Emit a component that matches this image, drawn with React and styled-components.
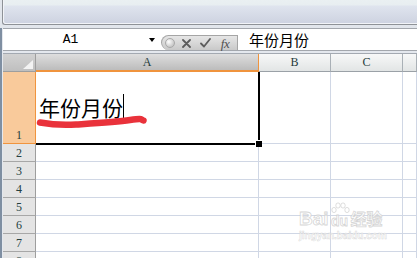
import React from "react";
import styled, { createGlobalStyle } from "styled-components";

const GlobalStyle = createGlobalStyle`
  html, body { margin: 0; padding: 0; }
  body {
    width: 417px; height: 258px; overflow: hidden;
    background: #dde2ea;
    font-family: "Liberation Sans", "Noto Sans CJK SC", sans-serif;
  }
  * { box-sizing: border-box; }
`;

const Window = styled.div`
  position: relative;
  width: 417px;
  height: 258px;
  overflow: hidden;
  display: flex;
  flex-direction: column;
  background: #e2e6ec;
`;

const Ribbon = styled.div`
  height: 25px;
  flex: none;
  margin-left: 2px;
  background: linear-gradient(to bottom, #eaf0f2 0px, #e8eef1 5px, #dfe4ee 6px, #cdd2e0 24px);
  border-left: 1px solid #8e9297;
  border-bottom: 1px solid #8e9297;
  border-bottom-left-radius: 3px;
  box-shadow: inset 1px -1px 0 #f2f4f8;
`;

const Workspace = styled.div`
  flex: 1;
  display: flex;
  flex-direction: column;
  margin-top: 3px;
  border-left: 2px solid #7f8fa2;
  padding-left: 1px;
  background: #e4e8ee;
`;

const FormulaBar = styled.div`
  height: 23px;
  flex: none;
  display: flex;
  align-items: stretch;
  background: #fff;
  border-top: 1px solid #a3a7ad;
  border-bottom: 1px solid #a3a7ad;
`;

const NameBox = styled.div`
  width: 135px;
  display: flex;
  align-items: center;
  justify-content: center;
  font-family: "Liberation Mono", monospace;
  font-size: 13px;
  color: #000;
`;

const ArrowBox = styled.div`
  width: 23px;
  display: flex;
  align-items: center;
  padding-left: 11px;
`;

const Arrow = styled.span`
  width: 0;
  height: 0;
  border-left: 3.5px solid transparent;
  border-right: 3.5px solid transparent;
  border-top: 4px solid #000;
`;

const FxGroup = styled.div`
  width: 77px;
  height: 15px;
  align-self: flex-end;
  display: flex;
  align-items: center;
  background: linear-gradient(to bottom, #e6e6e6, #c9c9c9);
  border: 1px solid #a5a5a5;
  border-bottom: none;
  border-radius: 8px 0 0 8px;
`;

const Knob = styled.span`
  width: 10px;
  height: 10px;
  margin-left: 3px;
  border-radius: 50%;
  border: 1px solid #a9a9a9;
  background: radial-gradient(circle at 35% 35%, #ffffff, #d4d4d4 55%, #b4b4b4);
`;

const Slot = styled.span`
  width: ${(p) => p.$w}px;
  display: flex;
  align-items: center;
  justify-content: center;
`;

const FxLabel = styled.span`
  font-family: "Liberation Serif", serif;
  font-style: italic;
  font-size: 13px;
  color: #505050;
  line-height: 1;
  letter-spacing: -0.5px;
`;

const FormulaInput = styled.div`
  flex: 1;
  display: flex;
  align-items: center;
  padding-left: 11px;
  font-family: "Noto Sans CJK SC", sans-serif;
  font-size: 15px;
  color: #000;
`;

const Sheet = styled.div`
  margin-top: 2px;
  flex: 1;
  display: grid;
  grid-template-columns: 33px 223px 72px 72px 1fr;
  grid-template-rows: 18px 72px repeat(7, 18px);
  border-top: 1px solid #a3a9b1;
  background: #fff;
`;

const Corner = styled.div`
  display: flex;
  align-items: flex-end;
  justify-content: flex-end;
  padding: 0 2px 2px 0;
  background: linear-gradient(to bottom, #d2d2d2, #bfbfbf);
  border-right: 1px solid #9e9e9e;
  border-bottom: 1px solid #9e9e9e;
`;

const CornerMark = styled.span`
  width: 0;
  height: 0;
  border-left: 10px solid transparent;
  border-bottom: 9px solid #f3f3f3;
`;

const ColHeader = styled.div`
  display: flex;
  align-items: center;
  justify-content: center;
  font-family: "Liberation Serif", serif;
  font-size: 12px;
  color: #1f3b3b;
  background: ${(p) =>
    p.$selected
      ? "linear-gradient(to bottom, #dedede, #bcbcbc)"
      : "linear-gradient(to bottom, #f7f8f8, #e2e5e5)"};
  border-right: 1px solid ${(p) => (p.$selected ? "#f0943e" : "#a9b0b6")};
  border-bottom: ${(p) => (p.$selected ? "2px solid #f0943e" : "1px solid #9ba1a7")};
`;

const RowHeader = styled.div`
  display: flex;
  align-items: ${(p) => (p.$selected ? "flex-end" : "center")};
  justify-content: center;
  font-family: "Liberation Serif", serif;
  font-size: 12px;
  line-height: 14px;
  color: #253f3f;
  background: ${(p) => (p.$selected ? "#f9ca9b" : "#e4e4e4")};
  border-right: 1px solid ${(p) => (p.$selected ? "#f0943e" : "#9e9e9e")};
  border-bottom: 1px solid ${(p) => (p.$selected ? "#f0943e" : "#a7a7a7")};
  padding-bottom: ${(p) => (p.$selected ? "1px" : "0")};
`;

const Cell = styled.div`
  background: #fff;
  border-right: 1px solid #d0d7e5;
  border-bottom: 1px solid #d0d7e5;
`;

const ActiveCell = styled(Cell)`
  position: relative;
  padding: 25px 0 0 3px;
`;

const Entry = styled.div`
  display: flex;
  align-items: flex-start;
  font-family: "Noto Sans CJK SC", sans-serif;
  font-size: 21px;
  line-height: 21px;
  color: #000;
`;

const Caret = styled.span`
  width: 1px;
  height: 24px;
  margin-top: -3px;
  background: #000;
`;

const Selection = styled.div`
  position: absolute;
  left: 0;
  top: 0;
  right: -2px;
  bottom: -2px;
  border-right: 2px solid #000;
  border-bottom: 2px solid #000;
  pointer-events: none;
`;

const FillHandle = styled.div`
  position: absolute;
  right: -4px;
  bottom: -4px;
  width: 7px;
  height: 7px;
  background: #000;
  border-left: 1px solid #fff;
  border-top: 1px solid #fff;
`;

const Scribble = styled.svg`
  position: absolute;
  left: 0;
  top: 0;
  pointer-events: none;
`;

const Watermark = styled.div`
  position: absolute;
  left: 299px;
  top: 202px;
  display: flex;
  flex-direction: column;
  align-items: flex-start;
  color: rgba(255, 255, 255, 0.85);
  pointer-events: none;
`;

const MarkRow = styled.div`
  display: flex;
  align-items: flex-end;
  gap: 1px;
`;

const MarkBig = styled.span`
  font-family: "Liberation Sans", "Noto Sans CJK SC", sans-serif;
  font-weight: bold;
  font-size: ${(p) => p.$size}px;
  line-height: 1;
  -webkit-text-stroke: 0.8px rgba(200, 200, 200, 0.75);
`;

const DuBox = styled.span`
  position: relative;
  display: flex;
  flex-direction: column;
  align-items: center;
`;

const MarkSmall = styled.span`
  font-family: "Liberation Sans", sans-serif;
  font-weight: bold;
  font-size: 10px;
  line-height: 1;
  margin-top: 3px;
  -webkit-text-stroke: 0.5px rgba(200, 200, 200, 0.7);
`;

const gridRows = [2, 3, 4, 5, 6, 7, 8];

export default function App() {
  return (
    <>
      <GlobalStyle />
      <Window>
        <Ribbon />
        <Workspace>
          <FormulaBar>
            <NameBox>A1</NameBox>
            <ArrowBox>
              <Arrow />
            </ArrowBox>
            <FxGroup>
              <Knob />
              <Slot $w={22}>
                <svg width="9" height="9" viewBox="0 0 9 9">
                  <path d="M1 1 L8 8 M8 1 L1 8" stroke="#5c5c5c" strokeWidth="1.8" strokeLinecap="round" />
                </svg>
              </Slot>
              <Slot $w={17}>
                <svg width="11" height="10" viewBox="0 0 11 10">
                  <path d="M1 5.5 L4 8.5 L10 1" stroke="#5c5c5c" strokeWidth="1.8" fill="none" strokeLinecap="round" strokeLinejoin="round" />
                </svg>
              </Slot>
              <Slot $w={22}>
                <FxLabel>fx</FxLabel>
              </Slot>
            </FxGroup>
            <FormulaInput>年份月份</FormulaInput>
          </FormulaBar>
          <Sheet>
            <Corner>
              <CornerMark />
            </Corner>
            <ColHeader $selected>A</ColHeader>
            <ColHeader>B</ColHeader>
            <ColHeader>C</ColHeader>
            <ColHeader />

            <RowHeader $selected>1</RowHeader>
            <ActiveCell>
              <Entry>
                <span>年份月份</span>
                <Caret />
              </Entry>
              <Scribble width="120" height="70" viewBox="0 0 120 70">
                <path
                  d="M4 50.5 C 15 52.5, 25 53.5, 40 52.5 S 80 50, 94 48 S 104 47.5, 107.5 48.5"
                  stroke="#e9323b"
                  strokeWidth="6.5"
                  fill="none"
                  strokeLinecap="round"
                  strokeLinejoin="round"
                />
              </Scribble>
              <Selection>
                <FillHandle />
              </Selection>
            </ActiveCell>
            <Cell />
            <Cell />
            <Cell />

            {gridRows.map((n) => (
              <React.Fragment key={n}>
                <RowHeader>{n}</RowHeader>
                <Cell />
                <Cell />
                <Cell />
                <Cell />
              </React.Fragment>
            ))}
          </Sheet>
        </Workspace>
        <Watermark>
          <MarkRow>
            <MarkBig $size={19}>Bai</MarkBig>
            <DuBox>
              <svg width="20" height="12" viewBox="0 0 20 12">
                <g fill="rgba(255,255,255,0.85)" stroke="rgba(200,200,200,0.75)" strokeWidth="0.8">
                  <ellipse cx="4" cy="8" rx="2.2" ry="2.6" />
                  <ellipse cx="8" cy="3.5" rx="2.2" ry="2.6" />
                  <ellipse cx="13" cy="3.5" rx="2.2" ry="2.6" />
                  <ellipse cx="17" cy="8" rx="2.2" ry="2.6" />
                </g>
              </svg>
              <MarkBig $size={14}>du</MarkBig>
            </DuBox>
            <MarkBig $size={16}>经验</MarkBig>
          </MarkRow>
          <MarkSmall>jingyan.baidu.com</MarkSmall>
        </Watermark>
      </Window>
    </>
  );
}
